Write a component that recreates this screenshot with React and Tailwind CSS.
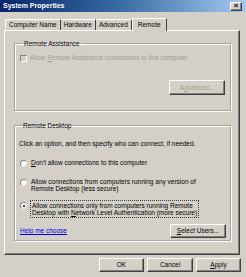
import React from "react";

const raised =
  "border border-t-white border-l-white border-r-[#404040] border-b-[#404040] shadow-[inset_-1px_-1px_0_#808080]";

function Button({ children, className = "", disabled = false }) {
  return (
    <div
      className={`flex items-center justify-center bg-[#d4d0c8] ${raised} ${
        disabled ? "text-[#a09c94]" : "text-black"
      } ${className}`}
    >
      {children}
    </div>
  );
}

function Radio({ checked }) {
  return (
    <div className="w-[7px] h-[7px] rounded-full bg-white border border-t-[#808080] border-l-[#808080] border-r-[#e8e6e0] border-b-[#e8e6e0] flex items-center justify-center shrink-0">
      {checked && <div className="w-[2px] h-[2px] rounded-full bg-black" />}
    </div>
  );
}

function Group({ title, className = "", children }) {
  return (
    <fieldset
      className={`border border-[#a8a49c] shadow-[inset_1px_1px_0_#ffffff,1px_1px_0_#ffffff] rounded-none ${className}`}
    >
      <legend className="ml-[3px] px-[1px] leading-[7px]">{title}</legend>
      {children}
    </fieldset>
  );
}

export default function App() {
  const tabs = ["Computer Name", "Hardware", "Advanced"];
  return (
    <div
      className="w-[246px] h-[277px] bg-[#d4d0c8] flex flex-col text-[6.5px] leading-[8px] text-black overflow-hidden"
      style={{ fontFamily: '"Liberation Sans", Arial, sans-serif' }}
    >
      {/* title bar */}
      <div className="h-[12px] flex items-center justify-between pl-[3px] pr-[4px] bg-gradient-to-r from-[#0a246a] via-[#3a6ea5] to-[#a6caf0]">
        <span className="text-white font-bold text-[7px]">System Properties</span>
        <div className={`w-[12px] h-[9px] bg-[#d4d0c8] ${raised} flex items-center justify-center text-[8px] leading-none font-bold`}>
          ×
        </div>
      </div>

      {/* tabs */}
      <div className="flex items-end pl-[5px] mt-[5px] h-[13px]">
        {tabs.map((t, i) => (
          <div
            key={t}
            className={`h-[11px] flex items-center px-[3px] border-t border-t-white ${
              i === 0 ? "border-l border-l-white rounded-tl-[1px]" : ""
            } border-r border-r-[#404040]`}
          >
            {t}
          </div>
        ))}
        <div className="h-[13px] flex items-center px-[5px] border-t border-l border-t-white border-l-white border-r border-r-[#404040] rounded-t-[1px] relative top-[1px] bg-[#d4d0c8] z-10">
          Remote
        </div>
      </div>

      {/* tab panel */}
      <div className="ml-[4px] w-[236px] h-[225px] border border-t-white border-l-white border-r-[#404040] border-b-[#404040] shadow-[inset_-1px_-1px_0_#808080] flex flex-col pl-[9px] pr-[8px] pt-[9px]">
        <Group title="Remote Assistance" className="h-[71px] px-[5px] flex flex-col">
          <div className="flex items-center gap-[3px] mt-[7px] text-[#a09c94]">
            <div className="w-[7px] h-[7px] bg-[#d4d0c8] border border-t-[#808080] border-l-[#808080] border-r-white border-b-white shrink-0" />
            <span>
              Allow <u>R</u>emote Assistance connections to this computer
            </span>
          </div>
          <div className="flex justify-end mt-[18px]">
            <Button disabled className="w-[56px] h-[15px]">
              A<u>d</u>vanced...
            </Button>
          </div>
        </Group>

        <Group title="Remote Desktop" className="h-[119px] mt-[11px] px-[4px] flex flex-col">
          <div className="mt-[11px]">
            Click an option, and then specify who can connect, if needed.
          </div>
          <div className="flex items-center gap-[4px] mt-[11px] pl-[1px]">
            <Radio />
            <span>
              <u>D</u>on't allow connections to this computer
            </span>
          </div>
          <div className="flex items-start gap-[4px] mt-[11px] pl-[1px]">
            <div className="mt-[1px]">
              <Radio />
            </div>
            <span className="leading-[7px]">
              Allow connections from computers running any version of
              <br />
              Remote Desktop (less secure)
            </span>
          </div>
          <div className="flex items-start gap-[3px] mt-[8px] pl-[1px]">
            <div className="mt-[2px]">
              <Radio checked />
            </div>
            <span className="leading-[7px] border border-dotted border-[#404040] px-[1px] py-[1px]">
              Allow connections only from computers running Remote
              <br />
              Desktop with <u>N</u>etwork Level Authentication (more secure)
            </span>
          </div>
          <div className="flex items-center justify-between mt-[6px]">
            <span className="text-[#0000ee] underline pl-[1px]">Help me choose</span>
            <Button className="w-[56px] h-[14px]">
              <u>S</u>elect Users...
            </Button>
          </div>
        </Group>
      </div>

      {/* bottom buttons */}
      <div className="flex justify-end gap-[3px] pr-[5px] mt-[3px]">
        <Button className="w-[45px] h-[14px]">OK</Button>
        <Button className="w-[46px] h-[14px]">Cancel</Button>
        <Button className="w-[45px] h-[14px]">
          <u>A</u>pply
        </Button>
      </div>
    </div>
  );
}
